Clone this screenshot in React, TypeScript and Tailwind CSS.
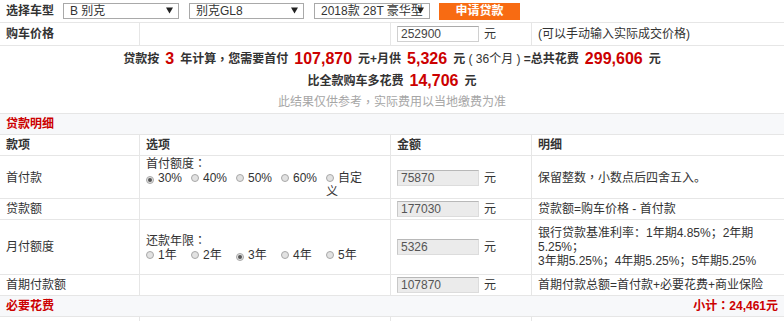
import type { ReactNode } from 'react'

// centred full-width punctuation, as in the original page's font
const P = ({ children }: { children: string }) => (
  <span className="inline-block leading-[14px] font-['Noto_Sans_CJK_TC',sans-serif]">{children}</span>
)

function FakeSelect({ value, w = 'w-[116px]' }: { value: string; w?: string }) {
  return (
    <div className={`relative h-[16px] border border-[#a9a9a9] bg-white ${w}`}>
      <div className="h-full overflow-hidden whitespace-nowrap pl-[6px] pr-[17px] text-[12px] leading-[14px] text-[#333]">
        {value}
      </div>
      <svg className="absolute right-[5px] top-[3px]" width="7" height="7" viewBox="0 0 7 7">
        <path d="M0 0.5h7L3.5 6.5z" fill="#222" />
      </svg>
    </div>
  )
}

function Radio({ label, checked = false }: { label: string; checked?: boolean }) {
  return (
    <span className="inline-block w-[45px] align-top">
      <span className="mr-[4px] inline-flex h-[8px] w-[8px] items-center justify-center rounded-full border border-[#a8a8a8] bg-[#e2e2e2] align-[0px]">
        {checked && <span className="h-[4px] w-[4px] rounded-full bg-[#555]" />}
      </span>
      {label}
    </span>
  )
}

function AmountInput({ value }: { value: string }) {
  return (
    <div className="flex items-center">
      <div className="h-[16px] w-[82px] border border-[#dcdcdc] border-t-[#b8b8b8] border-l-[#c8c8c8] bg-[#ebebeb] pl-[3px] leading-[14px] text-[#555]">
        {value}
      </div>
      <span className="ml-[5px]">元</span>
    </div>
  )
}

function Row({ h, cells }: { h: string; cells: ReactNode[] }) {
  return (
    <div className={`grid grid-cols-[140px_251px_141px_1fr] border-b border-[#e6e6e6] ${h}`}>
      {cells.map((c, i) => (
        <div key={i} className={`flex items-center px-[6px] ${i < 3 ? 'border-r border-[#e6e6e6]' : ''}`}>
          {c}
        </div>
      ))}
    </div>
  )
}

const Num = ({ children }: { children: ReactNode }) => (
  <span className="px-[6px] text-[16px] font-bold text-[#c00]">{children}</span>
)

export default function App() {
  return (
    <div className="h-[321px] w-[784px] overflow-hidden bg-white font-['Liberation_Sans','Noto_Sans_CJK_SC',sans-serif] text-[12px] text-[#333]">
      {/* car picker */}
      <div className="flex h-[23px] items-center gap-[10px] border-b border-[#e6e6e6] pl-[6px]">
        <span className="-mr-[1px] font-bold">选择车型</span>
        <FakeSelect value="B 别克" />
        <FakeSelect value="别克GL8" w="w-[115px]" />
        <FakeSelect value="2018款 28T 豪华型" />
        <button
          type="button"
          className="-ml-[1px] h-[17px] w-[81px] bg-[#f86b12] text-[12px] font-bold leading-[17px] text-white"
        >
          申请贷款
        </button>
      </div>

      <Row
        h="h-[23px]"
        cells={[
          <span className="font-bold">购车价格</span>,
          null,
          <div className="flex items-center">
            <div className="h-[16px] w-[82px] border border-[#d0d0d0] border-t-[#aaa] bg-white pl-[3px] leading-[14px] text-[#444]">
              252900
            </div>
            <span className="ml-[5px]">元</span>
          </div>,
          <span>(可以手动输入实际成交价格)</span>,
        ]}
      />

      {/* summary */}
      <div className="h-[68px] border-b border-[#e6e6e6] pt-[2px] text-center">
        <div className="flex h-[22px] items-center justify-center whitespace-pre font-bold">
          贷款按<Num>3</Num>年计算<P>，</P>您需要首付<Num>107,870</Num>元+月供<Num>5,326</Num>元
          <span className="font-normal"> ( 36个月 ) </span>=总共花费<Num>299,606</Num>元
        </div>
        <div className="flex h-[21px] items-center justify-center font-bold">
          比全款购车多花费<Num>14,706</Num>元
        </div>
        <div className="flex h-[21px] items-center justify-center text-[#a6a6a6]">
          此结果仅供参考<P>，</P>实际费用以当地缴费为准
        </div>
      </div>

      {/* loan detail */}
      <div className="flex h-[21px] items-center border-b border-[#e6e6e6] bg-[#f7f8fa] px-[6px] font-bold text-[#c00]">
        贷款明细
      </div>
      <Row
        h="h-[21px]"
        cells={[
          <span className="font-bold">款项</span>,
          <span className="font-bold">选项</span>,
          <span className="font-bold">金额</span>,
          <span className="font-bold">明细</span>,
        ]}
      />
      <Row
        h="h-[43px]"
        cells={[
          '首付款',
          <div className="leading-[14px]">
            <div>
              首付额度<P>：</P>
            </div>
            <div>
              <Radio label="30%" checked />
              <Radio label="40%" />
              <Radio label="50%" />
              <Radio label="60%" />
              <Radio label="自定义" />
            </div>
          </div>,
          <AmountInput value="75870" />,
          <span>
            保留整数<P>，</P>小数点后四舍五入。
          </span>,
        ]}
      />
      <Row
        h="h-[21px]"
        cells={['贷款额', null, <AmountInput value="177030" />, '贷款额=购车价格 - 首付款']}
      />
      <Row
        h="h-[55px]"
        cells={[
          '月付额度',
          <div className="leading-[14px]">
            <div>
              还款年限<P>：</P>
            </div>
            <div>
              <Radio label="1年" />
              <Radio label="2年" />
              <Radio label="3年" checked />
              <Radio label="4年" />
              <Radio label="5年" />
            </div>
          </div>,
          <AmountInput value="5326" />,
          <div className="whitespace-nowrap leading-[14px]">
            <div>银行贷款基准利率：1年期4.85%；2年期</div>
            <div>5.25%；</div>
            <div>3年期5.25%；4年期5.25%；5年期5.25%</div>
          </div>,
        ]}
      />
      <Row
        h="h-[21px]"
        cells={['首期付款额', null, <AmountInput value="107870" />, '首期付款总额=首付款+必要花费+商业保险']}
      />

      {/* required fees */}
      <div className="flex h-[21px] items-center justify-between border-b border-[#e6e6e6] bg-[#f7f8fa] px-[6px] font-bold text-[#c00]">
        <span>必要花费</span>
        <span>
          小计<P>：</P>24,461元
        </span>
      </div>
      <Row h="h-[21px]" cells={[null, null, null, null]} />
    </div>
  )
}
